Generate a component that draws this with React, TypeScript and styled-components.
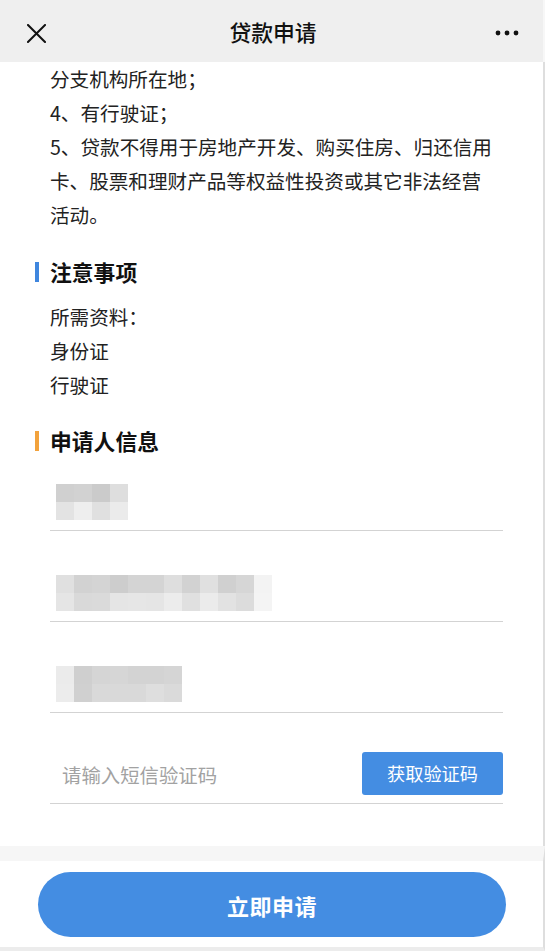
import React from "react";
import styled, { createGlobalStyle } from "styled-components";

const Global = createGlobalStyle`
  html, body { margin: 0; padding: 0; background: #ffffff; }
  body {
    font-family: "Noto Sans CJK SC", "Noto Sans", "Liberation Sans", sans-serif;
    color: #222;
    -webkit-font-smoothing: antialiased;
  }
  * { box-sizing: border-box; }
`;

const Page = styled.div`
  height: 100vh;
  display: flex;
  flex-direction: column;
  overflow: hidden;
`;

const Header = styled.header`
  flex: 0 0 62px;
  display: grid;
  grid-template-columns: 1fr auto 1fr;
  align-items: center;
  padding: 0 24px 0 27px;
  background: #efefef;
  border-right: 2px solid #f7f7f7;
`;

const Title = styled.h1`
  margin: 0;
  font-size: 21.8px;
  font-weight: 500;
  color: #111;
  letter-spacing: 0;
  line-height: 1;
  padding-top: 2px;
`;

const IconButton = styled.button<{ $end?: boolean }>`
  justify-self: ${(p) => (p.$end ? "end" : "start")};
  display: flex;
  align-items: center;
  padding: 0;
  border: 0;
  background: transparent;
  color: #111;
  margin-top: 4px;
`;

const Main = styled.main`
  flex: 1 1 auto;
  overflow: hidden;
  background: #fff;
  padding: 0 40px 0 50px;
  border-right: 2px solid #dedede;
`;

const TextBlock = styled.div`
  max-width: 448px;
`;

const Para = styled.p`
  margin: 0;
  font-size: 19.6px;
  line-height: 34px;
  color: #222;
`;

const SectionTitle = styled.h2<{ $accent: string; $top: number }>`
  position: relative;
  margin: ${(p) => p.$top}px 0 0;
  font-size: 21.8px;
  line-height: 34px;
  font-weight: 700;
  color: #111;
  &::before {
    content: "";
    position: absolute;
    left: -15px;
    top: 7px;
    width: 4px;
    height: 20px;
    background: ${(p) => p.$accent};
  }
`;

const List = styled.div`
  margin-top: 11px;
`;

const Fields = styled.div`
  display: flex;
  flex-direction: column;
  gap: 34px;
  margin-top: 16px;
`;

const FieldRow = styled.div`
  height: 57px;
  display: flex;
  align-items: center;
  border-bottom: 1px solid #d3d3d3;
  padding-bottom: 1px;
`;

const Mosaic = styled.div<{ $cols: number }>`
  display: grid;
  grid-template-columns: repeat(${(p) => p.$cols}, 18px);
  grid-auto-rows: 18px;
  margin-left: 6px;
`;

const Cell = styled.span<{ $c: string }>`
  display: block;
  background: ${(p) => p.$c};
`;

const CodeInput = styled.input`
  flex: 1;
  min-width: 0;
  border: 0;
  outline: none;
  background: transparent;
  padding: 0 0 0 12px;
  font-family: inherit;
  font-size: 19.4px;
  color: #333;
  &::placeholder { color: #a2a2a2; }
`;

const CodeButton = styled.button`
  flex: 0 0 141px;
  height: 43px;
  border: 0;
  border-radius: 3px;
  background: #448de2;
  color: #fff;
  font-family: inherit;
  font-size: 18.2px;
  padding: 0;
  margin-top: -3px;
`;

const Footer = styled.footer`
  flex: 0 0 auto;
  background: #fff;
  border-top: 15px solid #f6f6f6;
  border-bottom: 4px solid #ececec;
  border-right: 2px solid #dedede;
  padding: 11px 0 10px;
  display: flex;
  justify-content: center;
`;

const SubmitButton = styled.button`
  width: 468px;
  height: 65px;
  border: 0;
  border-radius: 33px;
  background: #448de2;
  color: #fff;
  font-family: inherit;
  font-size: 22px;
  font-weight: 700;
  letter-spacing: 0.5px;
  margin-left: 1px;
`;

const CloseIcon = () => (
  <svg width="19" height="19" viewBox="0 0 19 19" fill="none">
    <path d="M1 1 L18 18 M18 1 L1 18" stroke="#111" strokeWidth="2" strokeLinecap="square" />
  </svg>
);

const MoreIcon = () => (
  <svg width="24" height="6" viewBox="0 0 24 6">
    <circle cx="3" cy="3" r="2.4" fill="#111" />
    <circle cx="12" cy="3" r="2.4" fill="#111" />
    <circle cx="21" cy="3" r="2.4" fill="#111" />
  </svg>
);

const mosaics: string[][] = [
  [
    "#d0d0d0", "#d2d2d2", "#cbcbcb", "#dedede",
    "#e3e3e3", "#eeeeee", "#e0e0e0", "#ebebeb",
  ],
  [
    "#e0e0e0", "#d2d2d2", "#d4d4d4", "#cdcdcd", "#d4d4d4", "#d4d4d4", "#dedede", "#d2d2d2", "#e0e0e0", "#d0d0d0", "#d6d6d6", "#f3f3f3",
    "#e5e5e5", "#d9d9d9", "#dadada", "#e5e5e5", "#e6e6e6", "#e5e5e5", "#ececec", "#e0e0e0", "#ebebeb", "#e2e2e2", "#dcdcdc", "#f4f4f4",
  ],
  [
    "#ebebeb", "#cfcfcf", "#d5d5d5", "#d6d6d6", "#d3d3d3", "#d3d3d3", "#d5d5d5",
    "#ececec", "#d0d0d0", "#d9d9d9", "#d9d9d9", "#d9d9d9", "#dedede", "#dadada",
  ],
];

export default function App() {
  return (
    <>
      <Global />
      <Page>
        <Header>
          <IconButton aria-label="关闭">
            <CloseIcon />
          </IconButton>
          <Title>贷款申请</Title>
          <IconButton $end aria-label="更多">
            <MoreIcon />
          </IconButton>
        </Header>
        <Main>
          <TextBlock>
            <Para>分支机构所在地；</Para>
            <Para>4、有行驶证；</Para>
            <Para>5、贷款不得用于房地产开发、购买住房、归还信用卡、股票和理财产品等权益性投资或其它非法经营活动。</Para>
          </TextBlock>

          <SectionTitle $accent="#3f86de" $top={23}>注意事项</SectionTitle>
          <List>
            <Para>所需资料：</Para>
            <Para>身份证</Para>
            <Para>行驶证</Para>
          </List>

          <SectionTitle $accent="#f2a23c" $top={22}>申请人信息</SectionTitle>
          <Fields>
            {mosaics.map((cells, i) => (
              <FieldRow key={i}>
                <Mosaic $cols={cells.length / 2}>
                  {cells.map((c, j) => (
                    <Cell key={j} $c={c} />
                  ))}
                </Mosaic>
              </FieldRow>
            ))}
            <FieldRow>
              <CodeInput placeholder="请输入短信验证码" />
              <CodeButton>获取验证码</CodeButton>
            </FieldRow>
          </Fields>
        </Main>
        <Footer>
          <SubmitButton>立即申请</SubmitButton>
        </Footer>
      </Page>
    </>
  );
}
